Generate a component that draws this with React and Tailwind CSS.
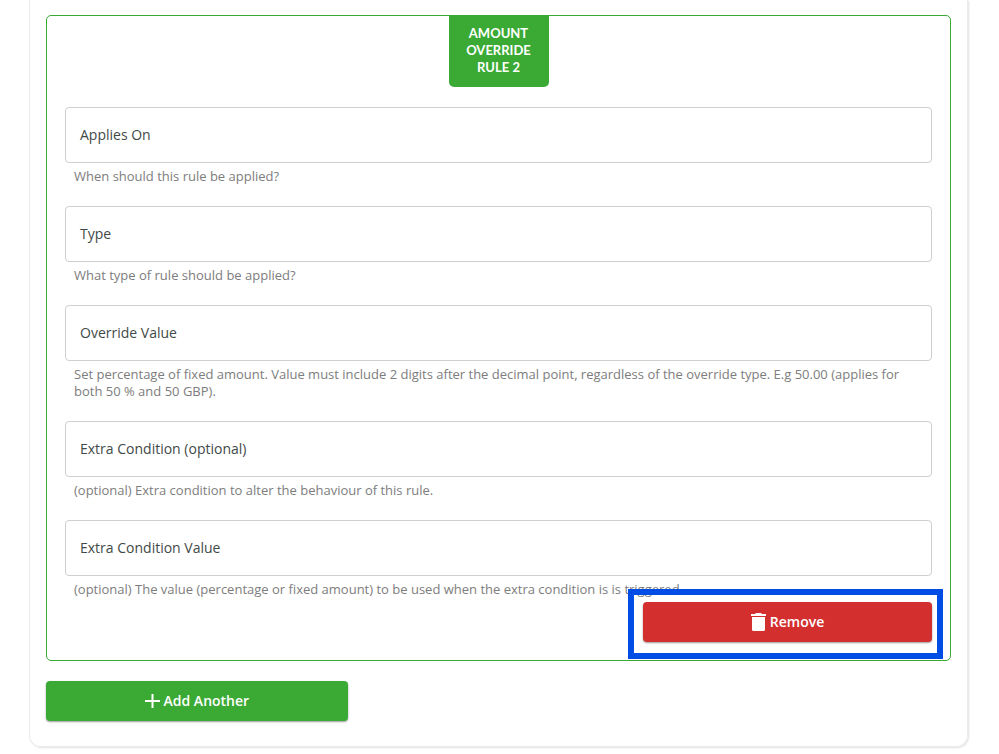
import { useId } from 'react';

const fields = [
    { label: 'Applies On', hint: 'When should this rule be applied?' },
    { label: 'Type', hint: 'What type of rule should be applied?' },
    {
        label: 'Override Value',
        hint: 'Set percentage of fixed amount. Value must include 2 digits after the decimal point, regardless of the override type. E.g 50.00 (applies for both 50 % and 50 GBP).',
    },
    { label: 'Extra Condition (optional)', hint: '(optional) Extra condition to alter the behaviour of this rule.' },
    {
        label: 'Extra Condition Value',
        hint: '(optional) The value (percentage or fixed amount) to be used when the extra condition is is triggered.',
    },
];

const TrashIcon = () => (
    <svg width="15" height="18" viewBox="0 0 15 18" fill="currentColor" aria-hidden="true">
        <path d="M0 1h4l1-1h5l1 1h4v2H0zM1 4h13v12.500q0 1.500-1.500 1.500h-10q-1.500 0-1.500-1.500z" />
    </svg>
);

const PlusIcon = () => (
    <svg width="15" height="14" viewBox="0 0 15 14" fill="currentColor" aria-hidden="true">
        <path d="M6.500 0h2v6H15v2H8.500v6h-2V8H0V6h6.500z" />
    </svg>
);

const Field = ({ label, hint }) => {
    const id = useId();

    return (
        <div>
            <div className="relative">
                <input
                    id={id}
                    type="text"
                    placeholder=" "
                    aria-describedby={`${id}-hint`}
                    className="peer block w-full h-14 px-[15px] rounded border border-[#cfcfcf] bg-white text-sm text-[#3f4a48] outline-none focus:border-[#3aaa35]"
                />
                {/* Sits over the empty input, hidden once a value is typed */}
                <label
                    htmlFor={id}
                    className="absolute inset-y-0 left-[15px] flex items-center text-sm text-[#3f4a48] pointer-events-none peer-[:not(:placeholder-shown)]:hidden"
                >
                    {label}
                </label>
            </div>
            <p id={`${id}-hint`} className="mt-[5px] px-[9px] text-[13px] leading-[17px] text-[#7d7d7d]">
                {hint}
            </p>
        </div>
    );
};

const buttonClass =
    'flex h-10 items-center justify-center gap-1 rounded text-sm font-semibold text-white shadow-[0_1px_2px_rgba(0,0,0,0.4)] cursor-pointer';

const App = () => {
    return (
        <main className="bg-white pl-[29px] pr-[31px] pb-1.5 font-['Open_Sans',sans-serif]">
            <section className="rounded-b-xl border-x border-b border-[#ececec] px-4 pt-[15px] pb-[25px] shadow-[1px_1px_2px_rgba(0,0,0,0.12)]">
                <fieldset className="min-w-0 rounded-[5px] border border-[#3aaa35] px-[18px] pb-[18px]">
                    <h2 className="mx-auto w-[100px] rounded-b-[5px] bg-[#3aaa35] px-3 pt-[9px] pb-[11px] text-center font-['Lato',sans-serif] text-[13px] leading-[17px] font-bold text-white uppercase">
                        Amount Override Rule 2
                    </h2>

                    <div className="mt-5 flex flex-col gap-[21px]">
                        {fields.map((field) => (
                            <Field key={field.label} {...field} />
                        ))}
                    </div>

                    <div className="relative mt-1 ml-auto w-1/3">
                        {/* Highlight frame around the button */}
                        <div className="absolute -top-[13px] -right-[11px] -bottom-[17px] -left-[15px] border-6 border-[#004de6] pointer-events-none" />
                        <button type="button" className={`${buttonClass} w-full bg-[#d32f2f]`}>
                            <TrashIcon />
                            Remove
                        </button>
                    </div>
                </fieldset>

                <button type="button" className={`${buttonClass} mt-5 w-1/3 bg-[#3aaa35]`}>
                    <PlusIcon />
                    Add Another
                </button>
            </section>
        </main>
    );
};

export default App;
